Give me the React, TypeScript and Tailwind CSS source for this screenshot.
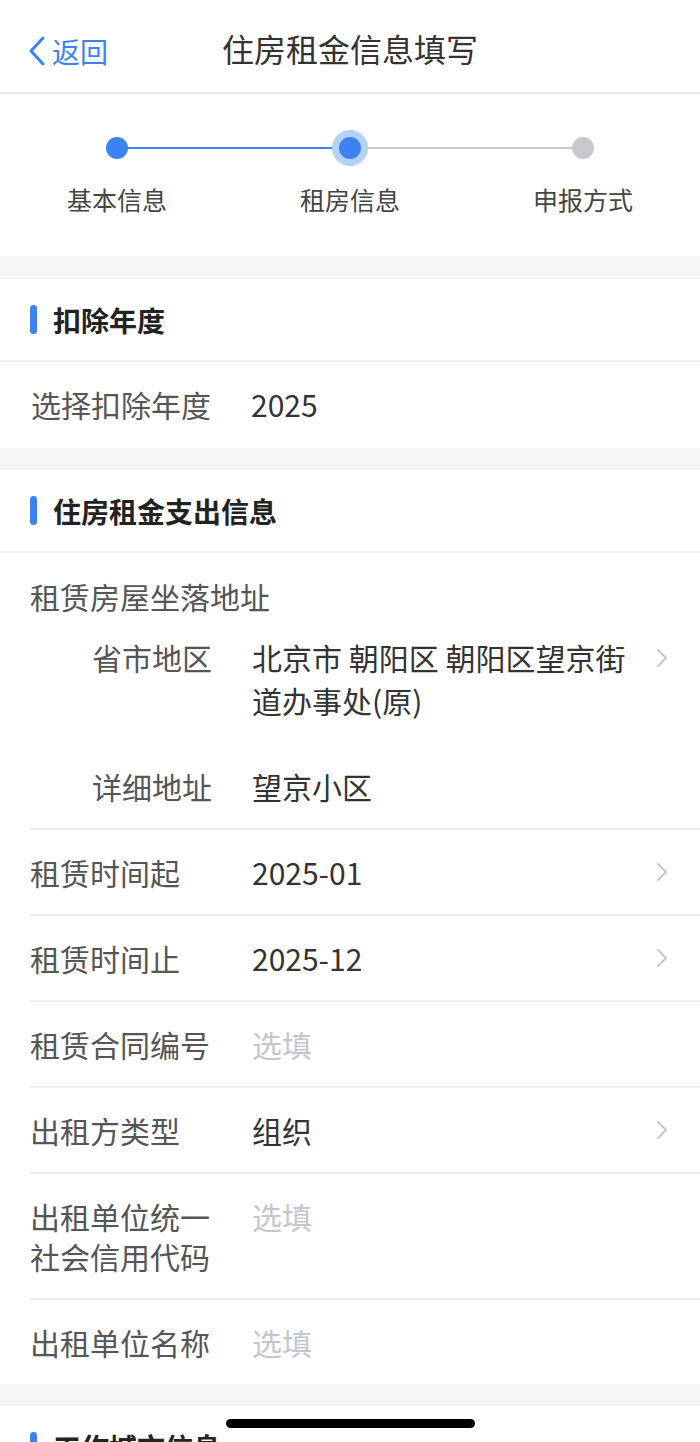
import React from "react";

const FONT = { fontFamily: '"Noto Sans CJK SC", "Noto Sans", sans-serif' };

function Chevron() {
  return (
    <svg width="12" height="20" viewBox="0 0 12 20" className="shrink-0">
      <polyline points="2,2 10,10 2,18" fill="none" stroke="#c4c6cc" strokeWidth="2" strokeLinecap="round" strokeLinejoin="round" />
    </svg>
  );
}

function SectionHeader({ title }: { title: string }) {
  return (
    <div className="flex h-[83px] items-center border-b-2 border-[#eef0f3] bg-white pl-[30px]">
      <div className="h-[29px] w-[7px] rounded-full bg-[#3d82f2]" />
      <div className="ml-[16px] text-[28px] font-bold leading-[40px] text-[#222]">{title}</div>
    </div>
  );
}

function Row({
  label,
  value,
  placeholder,
  chevron,
  last,
}: {
  label: string;
  value?: string;
  placeholder?: string;
  chevron?: boolean;
  last?: boolean;
}) {
  return (
    <div className={`ml-[30px] flex items-start pr-[32px] pt-[22px] pb-[22px] ${last ? "" : "border-b-2 border-[#eef0f3]"}`}>
      <div className="w-[182px] shrink-0 text-[30px] leading-[40px] text-[#555]">{label}</div>
      <div className="ml-[40px] flex-1 text-[30px] leading-[40px]">
        {value ? <span className="text-[#333]">{value}</span> : <span className="text-[#c3c6cc]">{placeholder}</span>}
      </div>
      {chevron && (
        <div className="flex h-[40px] items-center">
          <Chevron />
        </div>
      )}
    </div>
  );
}

export default function App() {
  return (
    <div className="relative h-[1442px] w-[700px] overflow-hidden bg-[#f4f5f7]" style={FONT}>
      {/* Header */}
      <div className="relative flex h-[94px] items-center justify-center border-b-2 border-[#e8e8ea] bg-white">
        <div className="absolute left-[28px] top-[34px] flex items-center">
          <svg width="18" height="32" viewBox="0 0 18 32">
            <polyline points="15,3 3,16 15,29" fill="none" stroke="#3d82f2" strokeWidth="3" strokeLinecap="round" strokeLinejoin="round" />
          </svg>
          <span className="ml-[6px] text-[28px] leading-[34px] text-[#3d82f2]">返回</span>
        </div>
        <div className="pt-[4px] text-[32px] leading-[40px] text-[#333]">住房租金信息填写</div>
      </div>

      {/* Stepper */}
      <div className="h-[162px] bg-white pt-[36px]">
        <div className="relative mx-auto h-[36px] w-[466px]">
          <div className="absolute left-[0px] top-[17px] h-[2px] w-[233px] bg-[#3d82f2]" />
          <div className="absolute left-[233px] top-[17px] h-[2px] w-[233px] bg-[#c9cbd0]" />
          <div className="absolute left-[-11px] top-[7px] h-[22px] w-[22px] rounded-full bg-[#3d82f2]" />
          <div className="absolute left-[215px] top-0 flex h-[36px] w-[36px] items-center justify-center rounded-full bg-[#b5d2fb]">
            <div className="h-[22px] w-[22px] rounded-full bg-[#3d82f2]" />
          </div>
          <div className="absolute left-[455px] top-[7px] h-[22px] w-[22px] rounded-full bg-[#c6c8ce]" />
        </div>
        <div className="mt-[16px] flex justify-between px-[17px]">
          <div className="w-[200px] text-center text-[25px] leading-[34px] text-[#444]">基本信息</div>
          <div className="w-[200px] text-center text-[25px] leading-[34px] text-[#444]">租房信息</div>
          <div className="w-[200px] text-center text-[25px] leading-[34px] text-[#444]">申报方式</div>
        </div>
      </div>

      {/* Section 1 */}
      <div className="mt-[23px] bg-white">
        <SectionHeader title="扣除年度" />
        <div className="flex items-start pb-[24px] pt-[22px] pl-[31px]">
          <div className="w-[182px] shrink-0 text-[30px] leading-[40px] text-[#555]">选择扣除年度</div>
          <div className="ml-[38px] text-[30px] leading-[40px] text-[#333]">2025</div>
        </div>
      </div>

      {/* Section 2 */}
      <div className="mt-[22px] bg-white">
        <SectionHeader title="住房租金支出信息" />
        <div className="ml-[30px] border-b-2 border-[#eef0f3] pr-[32px]">
          <div className="pt-[23px] text-[30px] leading-[40px] text-[#555]">租赁房屋坐落地址</div>
          <div className="flex items-start pt-[20px]">
            <div className="w-[182px] shrink-0 pl-[62px] text-[30px] leading-[43px] text-[#555]">省市地区</div>
            <div className="ml-[40px] flex-1 text-[30px] leading-[43px] text-[#333]">北京市 朝阳区 朝阳区望京街道办事处(原)</div>
            <div className="ml-[10px] flex h-[43px] items-center">
              <Chevron />
            </div>
          </div>
          <div className="flex items-start pb-[22px] pt-[44px]">
            <div className="w-[182px] shrink-0 pl-[62px] text-[30px] leading-[40px] text-[#555]">详细地址</div>
            <div className="ml-[40px] flex-1 text-[30px] leading-[40px] text-[#333]">望京小区</div>
          </div>
        </div>
        <Row label="租赁时间起" value="2025-01" chevron />
        <Row label="租赁时间止" value="2025-12" chevron />
        <Row label="租赁合同编号" placeholder="选填" />
        <Row label="出租方类型" value="组织" chevron />
        <Row label="出租单位统一社会信用代码" placeholder="选填" />
        <Row label="出租单位名称" placeholder="选填" last />
      </div>

      {/* Section 3 */}
      <div className="mt-[22px] bg-white">
        <SectionHeader title="工作城市信息" />
        <Row label="工作城市" value="北京市" chevron />
      </div>

      {/* Home indicator */}
      <div className="absolute bottom-[14px] left-[226px] h-[9px] w-[249px] rounded-full bg-black" />
    </div>
  );
}
